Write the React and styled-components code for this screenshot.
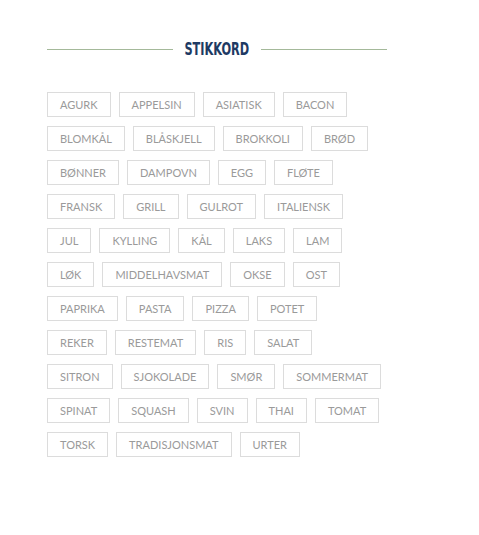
import styled, { createGlobalStyle } from 'styled-components';

const GlobalStyle = createGlobalStyle`
  body {
    margin: 0;
    background: #fff;
    font-family: Lato, "Open Sans", sans-serif;
  }
`;

const StyledSection = styled.section`
  width: 340px;
  padding: 36px 0 0 47px;
`;

const StyledHeading = styled.div`
  display: flex;
  align-items: center;
  gap: 12px;
  height: 26px;
  margin-bottom: 30px;

  &::before, &::after {
    content: '';
    flex: 1;
    height: 1px;
    background: #a4b99a;
  }

  h2 {
    display: inline-block;
    margin: 0 -12px;
    font-family: "DejaVu Sans Condensed", "DejaVu Sans", sans-serif;
    font-stretch: condensed;
    font-weight: 700;
    font-size: 17px;
    line-height: 26px;
    color: #1e3a63;
    transform: scaleX(0.74);
  }
`;

const StyledTagList = styled.ul`
  display: flex;
  flex-wrap: wrap;
  gap: 9px 8px;
  width: 336px;
  margin: 0;
  padding: 0;
  list-style: none;
`;

const StyledTag = styled.li`
  box-sizing: border-box;
  height: 25px;
  display: flex;
  align-items: center;
  padding: 0 12px;
  border: 1px solid #dcdcdc;
  font-size: 11px;
  color: #9a9a9a;
  text-transform: uppercase;
  white-space: nowrap;
`;

export default function App() {
  const tags = [
    'Agurk', 'Appelsin', 'Asiatisk', 'Bacon', 'Blomkål', 'Blåskjell', 'Brokkoli',
    'Brød', 'Bønner', 'Dampovn', 'Egg', 'Fløte', 'Fransk', 'Grill', 'Gulrot',
    'Italiensk', 'Jul', 'Kylling', 'Kål', 'Laks', 'Lam', 'Løk', 'Middelhavsmat',
    'Okse', 'Ost', 'Paprika', 'Pasta', 'Pizza', 'Potet', 'Reker', 'Restemat',
    'Ris', 'Salat', 'Sitron', 'Sjokolade', 'Smør', 'Sommermat', 'Spinat',
    'Squash', 'Svin', 'Thai', 'Tomat', 'Torsk', 'Tradisjonsmat', 'Urter'
  ];

  return (
    <>
      <GlobalStyle />
      <StyledSection>
        <StyledHeading>
          <h2>STIKKORD</h2>
        </StyledHeading>
        <StyledTagList>
          {tags.map(tag => <StyledTag key={tag}>{tag}</StyledTag>)}
        </StyledTagList>
      </StyledSection>
    </>
  );
}
